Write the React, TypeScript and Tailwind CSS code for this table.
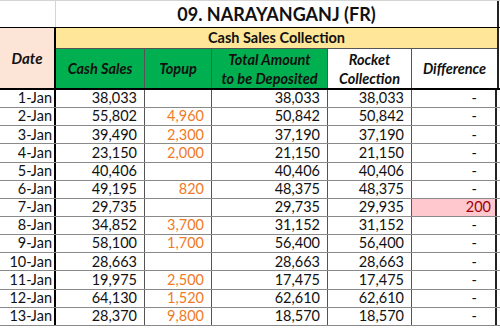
const rows: [string, string, string, string, string, string][] = [
  ['1-Jan', '38,033', '', '38,033', '38,033', '-'],
  ['2-Jan', '55,802', '4,960', '50,842', '50,842', '-'],
  ['3-Jan', '39,490', '2,300', '37,190', '37,190', '-'],
  ['4-Jan', '23,150', '2,000', '21,150', '21,150', '-'],
  ['5-Jan', '40,406', '', '40,406', '40,406', '-'],
  ['6-Jan', '49,195', '820', '48,375', '48,375', '-'],
  ['7-Jan', '29,735', '', '29,735', '29,935', '200'],
  ['8-Jan', '34,852', '3,700', '31,152', '31,152', '-'],
  ['9-Jan', '58,100', '1,700', '56,400', '56,400', '-'],
  ['10-Jan', '28,663', '', '28,663', '28,663', '-'],
  ['11-Jan', '19,975', '2,500', '17,475', '17,475', '-'],
  ['12-Jan', '64,130', '1,520', '62,610', '62,610', '-'],
  ['13-Jan', '28,370', '9,800', '18,570', '18,570', '-'],
];

const font = { fontFamily: 'Lato, "Liberation Sans", sans-serif' };

export default function App() {
  return (
    <div className="w-[500px] h-[330px] overflow-hidden bg-white text-[#111]" style={font}>
      {/* title */}
      <div className="flex h-[28px] border-t border-[#d4d4d4] border-b border-b-black">
        <div className="w-[56px] border-r border-[#d4d4d4]" />
        <div className="w-[443px] border-r-2 border-[#222] flex items-center justify-center text-[18px] font-bold leading-none">
          09. NARAYANGANJ (FR)
        </div>
      </div>

      {/* header */}
      <div className="flex h-[62px] border-b-2 border-black">
        <div className="w-[56px] shrink-0 bg-[#fce4d6] border-r-2 border-black flex items-center justify-center text-[15px] font-bold italic">
          Date
        </div>
        <div className="w-[443px] flex flex-col border-r-2 border-[#222]">
          <div className="h-[21px] shrink-0 bg-[#ffe699] border-b border-[#555] flex items-center justify-center text-[14.5px] font-bold">
            Cash Sales Collection
          </div>
          <div className="flex flex-1 text-[14.5px] font-bold italic leading-[19px] text-center">
            <div className="w-[89px] bg-[#00b050] border-r border-[#555] flex items-center justify-center">Cash Sales</div>
            <div className="w-[67px] bg-[#00b050] border-r border-[#555] flex items-center justify-center">Topup</div>
            <div className="w-[116px] bg-[#00b050] border-r border-[#555] flex items-center justify-center">
              Total Amount
              <br />
              to be Deposited
            </div>
            <div className="w-[84px] border-r border-[#555] flex items-center justify-center">
              Rocket
              <br />
              Collection
            </div>
            <div className="w-[85px] flex items-center justify-center">Difference</div>
          </div>
        </div>
      </div>

      {/* data */}
      <div className="text-[14.5px] leading-none">
        {rows.map(([d, cash, topup, total, rocket, diff]) => (
          <div key={d} className="flex h-[18.15px] border-b border-[#8a8a8a]">
            <div className="w-[56px] shrink-0 border-r-2 border-black flex items-center justify-end pr-[2px]">{d}</div>
            <div className="w-[89px] border-r border-[#555] flex items-center justify-end pr-[7px]">{cash}</div>
            <div className="w-[67px] border-r border-[#555] flex items-center justify-end pr-[7px] text-[#f07a26]">{topup}</div>
            <div className="w-[116px] border-r border-[#555] flex items-center justify-end pr-[7px]">{total}</div>
            <div className="w-[84px] border-r border-[#555] flex items-center justify-end pr-[7px]">{rocket}</div>
            {diff === '-' ? (
              <div className="w-[85px] border-r-2 border-[#222] flex items-center justify-end pr-[18px]">-</div>
            ) : (
              <div className="w-[85px] border-r-2 border-[#222] bg-[#ffc7ce] text-[#9c0006] flex items-center justify-end pr-[4px]">{diff}</div>
            )}
          </div>
        ))}
      </div>
    </div>
  );
}
